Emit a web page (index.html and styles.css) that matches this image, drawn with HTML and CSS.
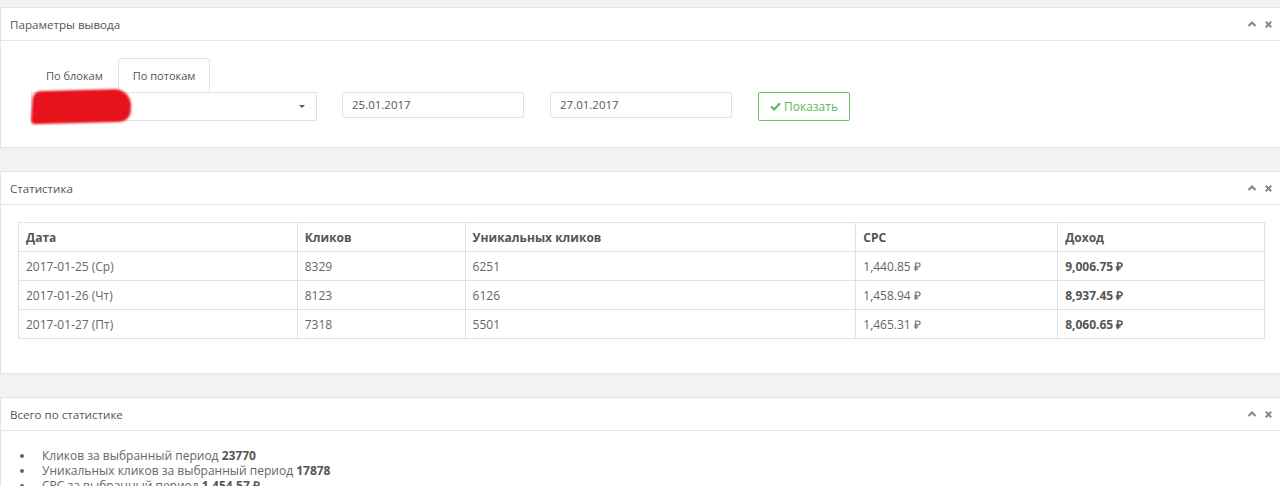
FILE: index.html
```html
<!DOCTYPE html>
<html lang="ru">
<head>
<meta charset="utf-8">
<link rel="stylesheet" href="styles.css">
</head>
<body>
<div class="page">
  <section class="panel panel-params">
    <header class="panel-head">
      <span class="panel-title">Параметры вывода</span>
      <span class="panel-tools">
        <svg class="ico" viewBox="0 0 10 10" width="10" height="10"><path d="M1.5 7 L5 3.5 L8.5 7" fill="none" stroke="#888" stroke-width="2.2"/></svg>
        <svg class="ico" viewBox="0 0 10 10" width="9" height="9"><path d="M2 2 L8 8 M8 2 L2 8" fill="none" stroke="#888" stroke-width="2.2"/></svg>
      </span>
    </header>
    <div class="panel-body params-body">
      <div class="tabs">
        <span class="tab">По блокам</span>
        <span class="tab active">По потокам</span>
      </div>
      <div class="controls">
        <div class="select">
          <span class="scribble"></span>
          <span class="caret"></span>
        </div>
        <div class="input">25.01.2017</div>
        <div class="input">27.01.2017</div>
        <button class="btn-show">
          <svg viewBox="0 0 12 10" width="11" height="9"><path d="M1 5 L4.5 8.2 L11 1.5" fill="none" stroke="#5cb85c" stroke-width="2.4"/></svg>
          Показать
        </button>
      </div>
    </div>
  </section>

  <section class="panel panel-stats">
    <header class="panel-head">
      <span class="panel-title">Статистика</span>
      <span class="panel-tools">
        <svg class="ico" viewBox="0 0 10 10" width="10" height="10"><path d="M1.5 7 L5 3.5 L8.5 7" fill="none" stroke="#888" stroke-width="2.2"/></svg>
        <svg class="ico" viewBox="0 0 10 10" width="9" height="9"><path d="M2 2 L8 8 M8 2 L2 8" fill="none" stroke="#888" stroke-width="2.2"/></svg>
      </span>
    </header>
    <div class="panel-body stats-body">
      <table class="table">
        <colgroup>
          <col class="c1"><col class="c2"><col class="c3"><col class="c4"><col class="c5">
        </colgroup>
        <thead>
          <tr><th>Дата</th><th>Кликов</th><th>Уникальных кликов</th><th>CPC</th><th>Доход</th></tr>
        </thead>
        <tbody>
          <tr><td>2017-01-25 (Ср)</td><td>8329</td><td>6251</td><td>1,440.85 ₽</td><td class="b">9,006.75 ₽</td></tr>
          <tr><td>2017-01-26 (Чт)</td><td>8123</td><td>6126</td><td>1,458.94 ₽</td><td class="b">8,937.45 ₽</td></tr>
          <tr><td>2017-01-27 (Пт)</td><td>7318</td><td>5501</td><td>1,465.31 ₽</td><td class="b">8,060.65 ₽</td></tr>
        </tbody>
      </table>
    </div>
  </section>

  <section class="panel panel-total">
    <header class="panel-head">
      <span class="panel-title">Всего по статистике</span>
      <span class="panel-tools">
        <svg class="ico" viewBox="0 0 10 10" width="10" height="10"><path d="M1.5 7 L5 3.5 L8.5 7" fill="none" stroke="#888" stroke-width="2.2"/></svg>
        <svg class="ico" viewBox="0 0 10 10" width="9" height="9"><path d="M2 2 L8 8 M8 2 L2 8" fill="none" stroke="#888" stroke-width="2.2"/></svg>
      </span>
    </header>
    <div class="panel-body total-body">
      <ul class="totals">
        <li>Кликов за выбранный период <b>23770</b></li>
        <li>Уникальных кликов за выбранный период <b>17878</b></li>
        <li>CPC за выбранный период <b>1,454.57 ₽</b></li>
      </ul>
    </div>
  </section>
</div>
</body>
</html>
```

FILE: styles.css
```css
html, body {
  margin: 0;
  padding: 0;
}
body {
  background: #f1f2f4;
  font-family: "Open Sans", "Liberation Sans", sans-serif;
  font-size: 12px;
  color: #666;
  overflow: hidden;
  height: 486px;
}
.page {
  padding-top: 7px;
  display: flex;
  flex-direction: column;
  gap: 23px;
  width: 1290px;
}
.panel {
  background: #fff;
  border: 1px solid #e3e4e8;
}
.panel-head {
  height: 32px;
  border-bottom: 1px solid #e6e7ea;
  display: flex;
  align-items: center;
  justify-content: space-between;
  padding: 0 16px 0 9px;
}
.panel-title {
  color: #555;
  font-size: 11.6px;
}
.panel-tools {
  display: flex;
  align-items: center;
  gap: 7px;
}
.ico { display: block; }

/* params */
.params-body {
  height: 106px;
  padding: 17px 0 0 30px;
  box-sizing: border-box;
}
.tabs {
  display: flex;
  height: 34px;
}
.tab {
  padding: 0 14px;
  line-height: 33px;
  font-size: 11px;
  color: #555;
  border: 1px solid transparent;
  border-bottom: none;
  border-radius: 3px 3px 0 0;
}
.tab.active {
  border-color: #e1e2e5;
  background: #fff;
}
.controls {
  display: flex;
  align-items: flex-start;
  gap: 25px;
}
.select {
  width: 286px;
  height: 29px;
  border: 1px solid #e1e2e5;
  box-sizing: border-box;
  position: relative;
}
.scribble {
  position: absolute;
  left: 0;
  top: -3px;
  width: 99px;
  height: 33px;
  background: #e8121c;
  border-radius: 8px 18px 10px 4px;
  transform: skewX(-5deg) rotate(-1.5deg);
  filter: blur(0.9px);
}
.caret {
  position: absolute;
  right: 11px;
  top: 12px;
  border-left: 3px solid transparent;
  border-right: 3px solid transparent;
  border-top: 3px solid #555;
}
.input {
  width: 182px;
  height: 26px;
  border: 1px solid #e1e2e5;
  border-radius: 2px;
  box-sizing: border-box;
  padding-left: 9px;
  line-height: 24px;
  color: #555;
  font-size: 11.5px;
}
.input + .input { margin-left: 1px; }
.btn-show {
  height: 29px;
  width: 92px;
  margin-left: 1px;
  border: 1px solid #6cc06c;
  border-radius: 2px;
  background: #fff;
  color: #5cb85c;
  font-family: "Open Sans", "Liberation Sans", sans-serif;
  font-size: 12px;
  display: flex;
  align-items: center;
  justify-content: center;
  gap: 3px;
  padding: 0;
}

/* stats */
.stats-body {
  padding: 17px 14px 34px 17px;
}
.table {
  border-collapse: collapse;
  width: 1247px;
  color: #666;
}
.table th, .table td {
  border: 1px solid #e1e2e5;
  text-align: left;
  padding: 0 7px;
  height: 28px;
}
.table th {
  font-weight: 700;
  color: #555;
}
.table td.b { font-weight: 700; color: #555; }
col.c1 { width: 279px; }
col.c2 { width: 168px; }
col.c3 { width: 391px; }
col.c4 { width: 202px; }
col.c5 { width: 207px; }

/* totals */
.total-body {
  padding-top: 17px;
}
.totals {
  margin: 0;
  padding-left: 41px;
  line-height: 15px;
  color: #666;
  list-style: none;
}
.totals li {
  position: relative;
}
.totals li::before {
  content: "";
  position: absolute;
  left: -22px;
  top: 6px;
  width: 4px;
  height: 4px;
  border-radius: 50%;
  background: #666;
}
.totals b { color: #555; }
```
